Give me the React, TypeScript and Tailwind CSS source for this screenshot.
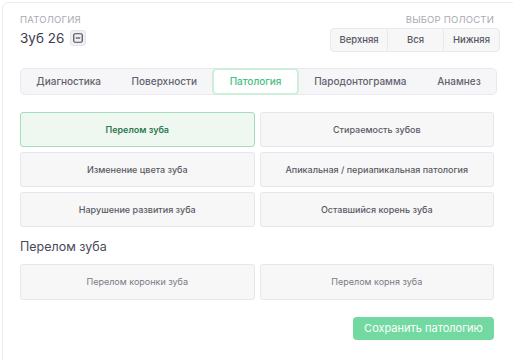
import React from "react";

const font = { fontFamily: "Inter, 'Noto Sans', sans-serif" };

const tabs = ["Диагностика", "Поверхности", "Патология", "Пародонтограмма", "Анамнез"];
const items = [
  "Перелом зуба",
  "Стираемость зубов",
  "Изменение цвета зуба",
  "Апикальная / периапикальная патология",
  "Нарушение развития зуба",
  "Оставшийся корень зуба",
];

export default function App() {
  return (
    <div className="w-[513px] h-[360px] bg-white overflow-hidden pl-[2px] pt-[2px]" style={font}>
      <div className="w-[520px] h-[380px] border border-[#ececf0] rounded-[6px] pl-[17px] pr-[25px] pt-[11px]">
        <div className="flex justify-between w-[477px]">
          <div>
            <div className="text-[9.5px] leading-[12px] tracking-[0.2px] text-[#a9a9b2] uppercase">Патология</div>
            <div className="flex items-center gap-[6px] mt-[2px]">
              <span className="text-[13.5px] leading-[20px] text-[#3c3c4c]">Зуб 26</span>
              <span className="w-[16px] h-[16px] rounded-[3px] bg-[#f0f0f3] border border-[#e4e4ea] flex items-center justify-center">
                <svg width="10" height="10" viewBox="0 0 10 10">
                  <rect x="0.75" y="0.75" width="8.5" height="8.5" rx="1.5" fill="none" stroke="#4a4a58" strokeWidth="1.2" />
                  <line x1="2.8" y1="5" x2="7.2" y2="5" stroke="#4a4a58" strokeWidth="1.2" />
                </svg>
              </span>
            </div>
          </div>
          <div className="flex flex-col items-end">
            <div className="text-[9.5px] leading-[12px] tracking-[0.2px] text-[#a9a9b2] uppercase mr-[3px]">Выбор полости</div>
            <div className="mt-[2px] flex border border-[#e8e8ee] rounded-[4px] bg-[#f7f7f8] h-[24px] -mr-[3px]">
              {["Верхняя", "Вся", "Нижняя"].map((t, i) => (
                <div
                  key={t}
                  className={
                    "w-[56px] flex items-center justify-center text-[9.5px] font-medium text-[#55555f] " +
                    (i > 0 ? "border-l border-[#e8e8ee]" : "")
                  }
                >
                  {t}
                </div>
              ))}
            </div>
          </div>
        </div>

        <div className="mt-[16px] w-[477px] h-[27px] flex bg-[#f6f6f8] border border-[#e8e8ee] rounded-[5px]">
          {tabs.map((t) => (
            <div
              key={t}
              className={
                "flex-auto flex items-center justify-center text-[10px] font-medium " +
                (t === "Патология"
                  ? "bg-white border-2 border-[#cdeed9] rounded-[5px] text-[#44c07f] -my-[1px]"
                  : "text-[#62626e]")
              }
            >
              {t}
            </div>
          ))}
        </div>

        <div className="mt-[17px] w-[474px] grid grid-cols-2 gap-x-[5px] gap-y-[5px]">
          {items.map((t, i) => (
            <div
              key={t}
              className={
                "h-[35px] rounded-[3px] border flex items-center justify-center text-[9px] " +
                (i === 0
                  ? "bg-[#eef8f1] border-[#a3dfbc] text-[#2f7a50] font-semibold"
                  : "bg-[#f7f7f8] border-[#e6e6ee] text-[#5a5a64] font-medium")
              }
            >
              {t}
            </div>
          ))}
        </div>

        <div className="mt-[12px] text-[12.5px] leading-[16px] text-[#4a4a5a]">Перелом зуба</div>

        <div className="mt-[9px] w-[474px] grid grid-cols-2 gap-x-[5px]">
          {["Перелом коронки зуба", "Перелом корня зуба"].map((t) => (
            <div
              key={t}
              className="h-[36px] rounded-[3px] border border-[#e6e6ee] bg-[#f7f7f8] flex items-center justify-center text-[9px] text-[#7a7a86]"
            >
              {t}
            </div>
          ))}
        </div>

        <div className="w-[474px] flex justify-end mt-[17px]">
          <button className="w-[141px] h-[23px] rounded-[4px] bg-[#72d9a0] text-white text-[11px]">
            Сохранить патологию
          </button>
        </div>
      </div>
    </div>
  );
}
